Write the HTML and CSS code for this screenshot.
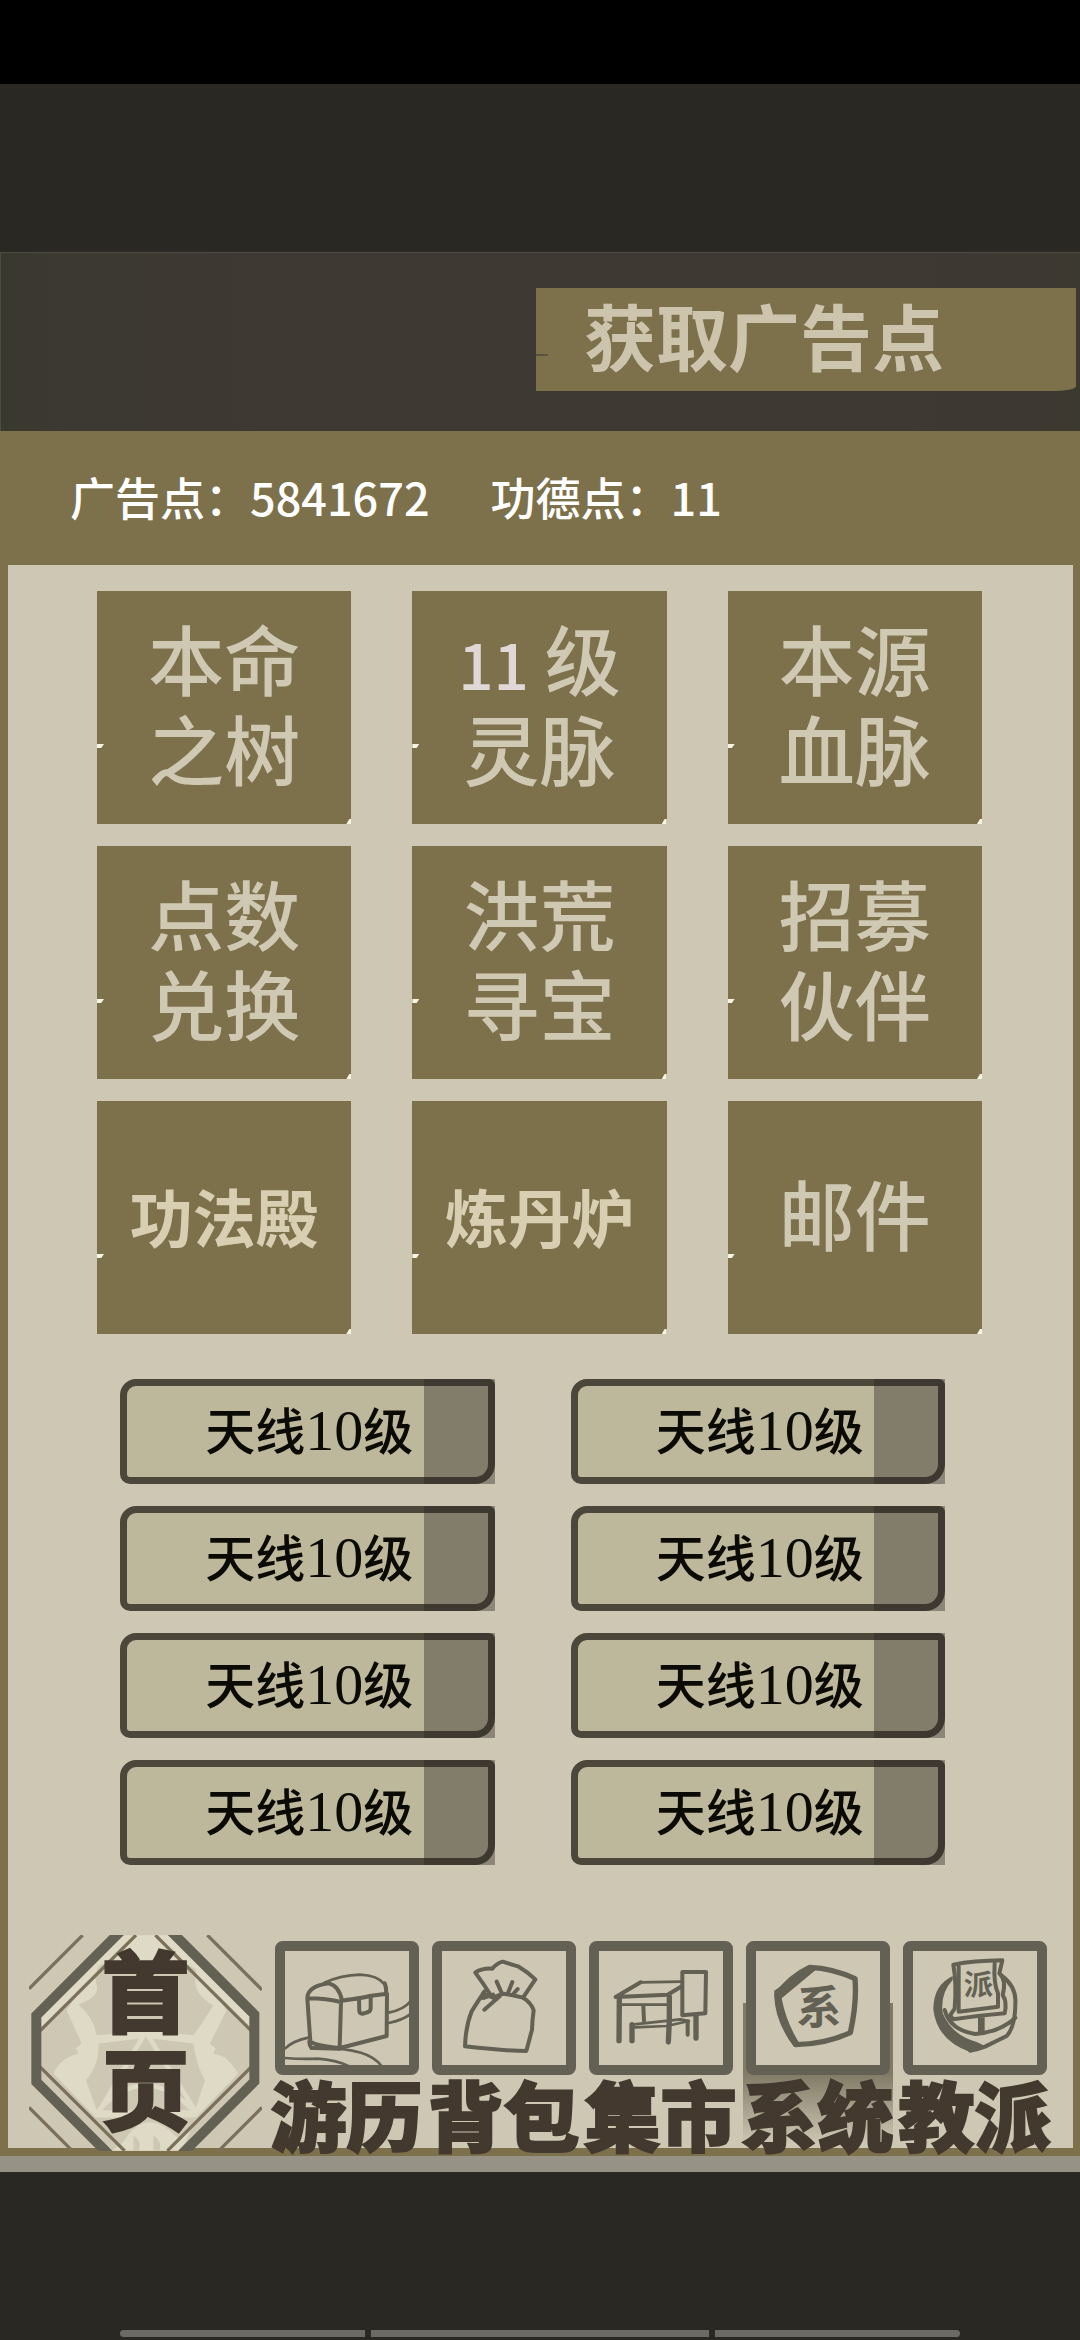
FILE: index.html
```html
<!DOCTYPE html>
<html lang="zh-CN">
<head>
    <meta charset="utf-8" />
    <meta name="viewport" content="width=device-width, initial-scale=1" />
    <title>系统</title>
    <link rel="stylesheet" href="styles.css">
</head>
<body>
    <div class="status-bar"></div>

    <header class="top">
        <button class="get-points" type="button">获取广告点</button>
    </header>

    <section class="points">
        <span>广告点：5841672</span>
        <span>功德点：11</span>
    </section>

    <main class="panel">
        <!-- Main functions -->
        <div class="tiles">
            <button class="tile" type="button">本命<br>之树</button>
            <button class="tile" type="button"><span class="level">11</span>级<br>灵脉</button>
            <button class="tile" type="button">本源<br>血脉</button>
            <button class="tile" type="button">点数<br>兑换</button>
            <button class="tile" type="button">洪荒<br>寻宝</button>
            <button class="tile" type="button">招募<br>伙伴</button>
            <button class="tile tile-bold" type="button">功法殿</button>
            <button class="tile tile-bold" type="button">炼丹炉</button>
            <button class="tile" type="button">邮件</button>
        </div>

        <!-- Antennas -->
        <div class="antennas">
            <button class="antenna" type="button">天线<span>10</span>级</button>
            <button class="antenna" type="button">天线<span>10</span>级</button>
            <button class="antenna" type="button">天线<span>10</span>级</button>
            <button class="antenna" type="button">天线<span>10</span>级</button>
            <button class="antenna" type="button">天线<span>10</span>级</button>
            <button class="antenna" type="button">天线<span>10</span>级</button>
            <button class="antenna" type="button">天线<span>10</span>级</button>
            <button class="antenna" type="button">天线<span>10</span>级</button>
        </div>

        <nav class="menu">
            <a class="home" href="#home">
                <svg class="home-art" viewBox="87 75 699 647" aria-hidden="true">
                    <path fill="#cdc7b3" d="M350 75H520L763 318V514L555 722H320L110 514V318Z" />
                    <g fill="#dfdac6">
                        <path d="M350 75L110 318L125 350L240 240L200 300L245 400Q180 450 160 490L285 620L335 722H545L590 620L715 490Q690 450 630 400L680 300L640 240L750 350L763 318L520 75Z" />
                    </g>
                    <g fill="#cdc7b3">
                        <path d="M300 165Q340 145 400 155L480 155Q540 140 590 180Q570 250 640 285Q600 350 580 375L437 362L290 375Q280 320 235 283Q300 260 290 225Q280 190 300 165Z" />
                        <path d="M295 400L420 385L437 375L455 385L580 400Q590 470 615 510L585 600H290L258 510Q300 460 295 400Z" />
                        <path d="M285 622H590L540 690Q440 580 370 695L335 722Z" />
                        <path d="M180 440Q170 400 200 360L235 430Q200 440 180 460ZM695 440Q705 400 675 360L640 430Q680 440 700 460Z" />
                        <path d="M125 360V470L165 480Q150 400 205 320L190 300ZM750 360V470L710 480Q725 400 670 320L685 300Z" />
                        <path d="M400 720V675Q425 690 417 720ZM460 720V675Q485 690 480 720Z" />
                    </g>
                    <g fill="none" stroke="#dfdac6" stroke-width="14">
                        <path d="M240 385Q350 390 437 362Q530 390 630 385" />
                        <path d="M437 365L300 600M437 365L585 600M285 612Q435 440 590 612" />
                    </g>
                    <g fill="none" stroke="#7b705a" stroke-width="10">
                        <path d="M248 75L87 236M622 75L786 239M87 592L212 717M786 592L656 722" />
                        <path d="M408 75L120 362M466 75L754 362M120 470L374 722M754 470L502 722" />
                    </g>
                    <path fill="none" stroke="#636153" stroke-width="30" d="M362 63L109 316V515L335 741M510 60L763 313V514L545 732" />
                </svg>
                <span>首<br>页</span>
            </a>

            <a class="item" href="#travel">
                <svg viewBox="42 65 432 402" aria-hidden="true">
                    <rect class="frame" x="57" y="80" width="402" height="372" rx="8" />
                    <g class="ink thin">
                        <path d="M72 388Q95 364 145 354M150 388Q230 382 300 400Q340 412 362 440M72 416Q120 420 170 418Q225 422 262 440M383 280Q430 270 446 248M383 311Q425 302 446 286" />
                        <path d="M190 190Q240 168 297 166Q350 168 371 195" />
                    </g>
                    <g class="ink">
                        <path d="M371 192Q378 210 374 224M203 192Q235 200 243 244Q310 235 325 230L378 223L377 350L237 386Q160 378 148 366L139 237Q140 200 203 192ZM139 237Q200 238 240 248L236 385M145 366Q145 388 160 386L237 388" />
                        <path d="M294 238L295 276Q296 284 306 283L322 278Q329 275 329 266V232" />
                    </g>
                </svg>
                <span>游历</span>
            </a>

            <a class="item" href="#bag">
                <svg viewBox="507 64 432 402" aria-hidden="true">
                    <rect class="frame" x="522" y="79" width="402" height="372" rx="8" />
                    <g class="ink">
                        <path d="M684 228Q660 190 637 159Q655 145 688 147Q702 130 719 126L765 140Q795 158 817 179L780 234Q805 250 812 272Q808 300 807 330L790 394Q730 394 606 380Q608 320 626 275Q648 240 664 216" />
                        <path d="M660 222L690 234L720 222L745 226L780 234M664 270L710 230M701 186L716 220M748 187L735 220M764 208L748 226M660 235L690 225" />
                    </g>
                </svg>
                <span>背包</span>
            </a>

            <a class="item" href="#market">
                <svg viewBox="52 63 432 402" aria-hidden="true">
                    <rect class="frame" x="67" y="78" width="402" height="372" rx="8" />
                    <g class="ink thin">
                        <path d="M207 187L328 185M150 254H285M180 314L326 298L352 303L285 318L190 322" />
                    </g>
                    <g class="ink">
                        <path d="M132 231L207 187M132 231L288 224L328 200M215 258L217 302M348 304V344" />
                        <path d="M332 156H403L401 280L332 286Z" />
                    </g>
                    <path class="ink thick" d="M143 235L142 362M293 230V300L290 366M181 314V362M373 290V354" />
                </svg>
                <span>集市</span>
            </a>

            <a class="item active" href="#system">
                <svg viewBox="519 63 432 402" aria-hidden="true">
                    <rect class="frame" x="534" y="78" width="402" height="372" rx="8" />
                    <path class="ink thick" d="M846 176Q852 250 832 338Q760 372 668 374Q620 310 612 225Q650 170 710 142Q780 145 846 176Z" />
                    <path fill="#636153" d="M710 136L604 212Q600 300 664 380L682 374Q640 310 626 235L728 150Z" />
                    <text class="seal" x="670" y="312" font-size="136">系</text>
                </svg>
                <span>系统</span>
            </a>

            <a class="item" href="#sect">
                <svg viewBox="129 63 432 402" aria-hidden="true">
                    <rect class="frame" x="144" y="78" width="402" height="372" rx="8" />
                    <path fill="#636153" d="M278 168Q220 195 220 268Q230 360 330 396L380 380L350 366Q275 345 248 280Q240 220 278 180Z" />
                    <g class="ink">
                        <path d="M424 166Q470 200 466 250Q466 320 440 348L375 380Q350 390 330 392M254 270Q270 330 345 342Q420 336 466 293" />
                        <path d="M280 134Q340 122 427 121L418 160Q440 180 428 225Q442 245 434 280Q350 288 280 298L270 286L284 266Q290 190 280 134Z" />
                        <path d="M296 140V275L414 260V220Q400 190 404 130" />
                    </g>
                    <path fill="none" stroke="#636153" stroke-width="20" d="M364 292V340" />
                    <text class="seal" x="311" y="226" font-size="88">派</text>
                </svg>
                <span>教派</span>
            </a>
        </nav>
    </main>

    <div class="gesture-bar">
        <i></i><i></i><i></i>
    </div>
</body>
</html>
```

FILE: styles.css
```css
* {
    box-sizing: border-box;
}
body {
    margin: 0;
    min-height: 100vh;
    display: flex;
    flex-direction: column;
    background: #292822;
    font-family: "Noto Sans CJK SC", sans-serif;
}
button {
    font-family: inherit;
    border: 0;
    margin: 0;
    padding: 0;
    cursor: pointer;
}
a {
    color: inherit;
    text-decoration: none;
}

.status-bar {
    height: 84px;
    background: #000;
}

.top {
    margin-top: 168px;
    padding: 35px 4px 40px 0;
    border: 1px solid #4c4c42;
    border-width: 1px 0 0 1px;
    background: linear-gradient(90deg, #3a3930, #3e3933 25%, #3f3934 75%, #3c3931);
    display: flex;
    justify-content: flex-end;
}
.get-points {
    position: relative;
    width: 540px;
    padding: 0 0 11px 48px;
    background: #7d714c;
    color: #cdc4ad;
    font-size: 72px;
    font-weight: 700;
    line-height: 92px;
    text-align: left;
    border-bottom-right-radius: 20px 5px;
}
.get-points::before {
    content: "";
    position: absolute;
    left: 0;
    top: 66px;
    width: 12px;
    height: 2px;
    background: #5b5340;
}

.points {
    display: flex;
    gap: 61px;
    padding: 34px 70px 36px;
    background: #7d714c;
    color: #fff;
    font-size: 45px;
    font-weight: 500;
    line-height: 64px;
}

.panel {
    border: 8px solid #7d714c;
    border-top: 0;
    border-right-width: 7px;
    background: #cdc7b3;
    padding-top: 26px;
}

.tiles {
    display: grid;
    grid-template-columns: repeat(3, 1fr);
    gap: 22px 61px;
    padding: 0 91px 0 89px;
}
.tile {
    position: relative;
    height: 233px;
    padding-bottom: 12px;
    background: #7d714c;
    color: #cfc8b3;
    font-size: 76px;
    font-weight: 500;
    line-height: 90px;
}
.tile::before,
.tile::after {
    content: "";
    position: absolute;
    background: #f8f4e2;
}
.tile::before {
    left: 0;
    top: 153px;
    width: 7px;
    height: 4px;
    clip-path: polygon(0 0, 100% 0, 60% 100%, 0 100%);
}
.tile::after {
    right: 0;
    bottom: 0;
    width: 5px;
    height: 5px;
    clip-path: polygon(60% 0, 100% 0, 100% 100%, 0 100%);
}
.level {
    margin-right: 16px;
    color: #e0d8d6;
    font-size: 62px;
    line-height: 62px;
}
.tile-bold {
    color: #d8cfb2;
    font-size: 63px;
    font-weight: 700;
    padding-bottom: 6px;
}

.antennas {
    display: grid;
    grid-template-columns: 1fr 1fr;
    gap: 22px 76px;
    padding: 45px 128px 0 112px;
}
.antenna {
    position: relative;
    height: 105px;
    padding: 0 0 4px 4px;
    border: 7px solid #4b473b;
    border-radius: 16px 6px 20px 10px;
    background: #bdb89b;
    color: #0b0a05;
    font-size: 50px;
    font-weight: 500;
    line-height: 80px;
}
.antenna span {
    font-family: "Liberation Serif", serif;
    font-size: 58px;
    font-weight: normal;
}
/* shaded end of the plate, lies over its frame */
.antenna::after {
    content: "";
    position: absolute;
    top: -7px;
    right: -7px;
    bottom: -7px;
    width: 71px;
    background: rgba(40, 38, 32, 0.4);
}

.menu {
    display: flex;
    align-items: flex-end;
    padding: 70px 20px 0 21px;
    margin-bottom: -3px;
    color: #43392e;
    font-weight: 900;
    -webkit-text-stroke: 2px #43392e;
}
.home {
    position: relative;
    width: 233px;
    height: 216px;
    margin-right: 6px;
}
.home-art {
    display: block;
    width: 233px;
    height: 216px;
}
.home span {
    position: absolute;
    inset: 0;
    padding-top: 3px;
    font-size: 88px;
    line-height: 98px;
    text-align: center;
}
.item {
    flex: 1;
    display: flex;
    flex-direction: column;
    align-items: center;
}
.item svg {
    width: 144px;
    height: 134px;
}
.item span {
    font-size: 76px;
    line-height: 76px;
    white-space: nowrap;
}
.active {
    background: linear-gradient(#7f7966 48%, #cdc7b3 97%) center 62px / 150px 145px no-repeat;
}
.frame {
    fill: #cdc7b3;
    stroke: #636153;
    stroke-width: 30;
}
.ink {
    fill: none;
    stroke: #636153;
    stroke-width: 12;
    stroke-linecap: round;
    stroke-linejoin: round;
}
.thin {
    stroke-width: 8;
}
.thick {
    stroke-width: 16;
}
.seal {
    fill: #636153;
    font-weight: 700;
    -webkit-text-stroke: 0;
}

/* shelf under the panel */
.panel::after {
    content: "";
    display: block;
    height: 16px;
    margin: 8px -7px -24px -8px;
    background: #969286;
}

.gesture-bar {
    display: flex;
    gap: 6px;
    margin-top: auto;
    padding: 0 120px 3px;
}
.gesture-bar i {
    flex: 245;
    height: 7px;
    background: #6b6a63;
}
.gesture-bar i:nth-child(2) {
    flex: 338;
}
.gesture-bar i:first-child {
    border-radius: 4px 0 0 4px;
}
.gesture-bar i:last-child {
    border-radius: 0 4px 4px 0;
}
```
